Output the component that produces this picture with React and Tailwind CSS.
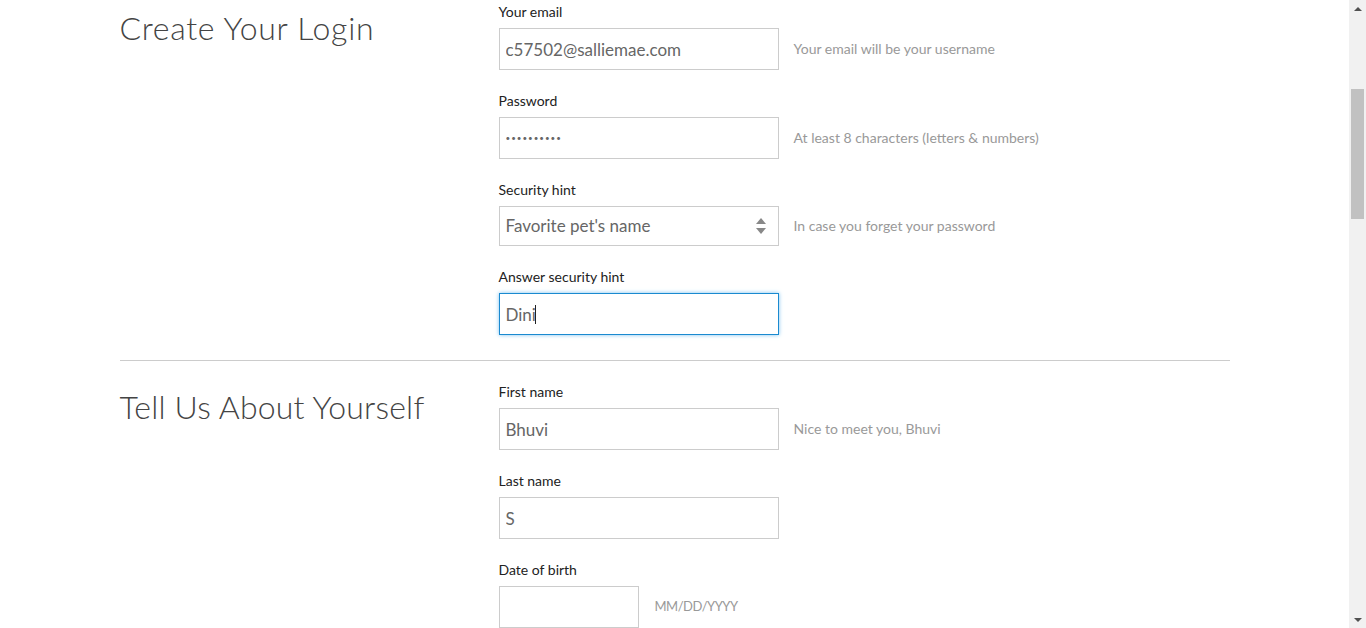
import React from "react";

const sans = { fontFamily: "Lato, 'Liberation Sans', sans-serif" };

const Field = ({ label, children, help, helpCls, last }) => (
  <div className={last ? "" : "mb-[21px]"}>
    <label className="block text-[14px] leading-5 text-[#222] mb-[6px]">{label}</label>
    <div className="flex items-center gap-[15px]">
      {children}
      {help && <span className={helpCls || "-mt-px text-[14px] text-[#999]"}>{help}</span>}
    </div>
  </div>
);

const inputCls =
  "h-[42px] w-[280px] border border-[#ccc] bg-white px-[6px] text-[17px] text-[#666] outline-none";

const Scrollbar = () => (
  <div className="w-[17px] h-full bg-[#f1f1f1] flex flex-col shrink-0">
    <div className="h-[17px] flex items-center justify-center">
      <svg width="8" height="4" viewBox="0 0 8 4">
        <path d="M0 4 L4 0 L8 4 Z" fill="#505050" />
      </svg>
    </div>
    <div className="flex-1">
      <div className="mt-[72px] h-[130px] mx-[2px] bg-[#c1c1c1]" />
    </div>
    <div className="h-[17px] flex items-center justify-center">
      <svg width="8" height="4" viewBox="0 0 8 4">
        <path d="M0 0 L8 0 L4 4 Z" fill="#505050" />
      </svg>
    </div>
  </div>
);

export default function App() {
  return (
    <div className="h-screen w-full flex overflow-hidden bg-white" style={sans}>
      <div className="flex-1 overflow-hidden">
        <div className="w-[1110px] mx-auto">
          <section className="flex pb-[25px] border-b border-[#ccc] pt-[2px]">
            <div className="w-[379px] shrink-0">
              <h2 className="mt-[6px] text-[32px] leading-[40px] font-light tracking-[0.7px] text-[#444]">
                Create Your Login
              </h2>
            </div>
            <div>
              <Field label="Your email" help="Your email will be your username">
                <input className={inputCls} defaultValue="c57502@salliemae.com" />
              </Field>
              <Field label="Password" help="At least 8 characters (letters & numbers)">
                <input
                  type="password"
                  className="h-[42px] w-[280px] border border-[#ccc] bg-white px-[6px] text-[8px] tracking-[1px] text-[#666] outline-none"
                  defaultValue="abcdefgh12"
                />
              </Field>
              <Field label="Security hint" help="In case you forget your password">
                <div className="h-[40px] w-[280px] border border-[#ccc] bg-white flex items-center px-[6px] text-[17px] text-[#666]">
                  <span className="flex-1">Favorite pet's name</span>
                  <svg width="12" height="18" viewBox="0 0 12 18" className="mr-[5px]">
                    <path d="M1 7 L6 1 L11 7 Z" fill="#888" />
                    <path d="M1 11 L11 11 L6 17 Z" fill="#888" />
                  </svg>
                </div>
              </Field>
              <Field label="Answer security hint" last>
                <div className="relative">
                  <input
                    className="h-[42px] w-[280px] border border-[#1a8ad0] shadow-[0_0_4px_#7cc2ef] bg-white px-[6px] text-[17px] text-[#666] outline-none"
                    defaultValue="Dini"
                  />
                  <span className="absolute left-[36px] top-[12px] h-[19px] w-px bg-[#222]" />
                </div>
              </Field>
            </div>
          </section>

          <section className="flex pt-[21px]">
            <div className="w-[379px] shrink-0">
              <h2 className="mt-[5px] text-[32px] leading-[40px] font-light tracking-[0.2px] text-[#444]">
                Tell Us About Yourself
              </h2>
            </div>
            <div>
              <Field label="First name" help="Nice to meet you, Bhuvi">
                <input className={inputCls} defaultValue="Bhuvi" />
              </Field>
              <Field label="Last name">
                <input className={inputCls} defaultValue="S" />
              </Field>
              <Field
                label="Date of birth"
                help="MM/DD/YYYY"
                helpCls="ml-px text-[13px] tracking-[-0.5px] text-[#999]"
                last
              >
                <input className="h-[42px] w-[140px] border border-[#ccc] bg-white px-[6px] text-[17px] text-[#666] outline-none" />
              </Field>
            </div>
          </section>
        </div>
      </div>
      <Scrollbar />
    </div>
  );
}
